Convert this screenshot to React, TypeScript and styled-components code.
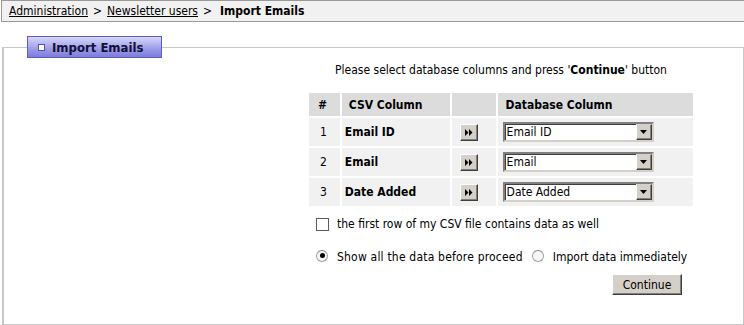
import React from "react";
import styled, { createGlobalStyle } from "styled-components";

const Global = createGlobalStyle`
  html, body { margin: 0; padding: 0; background: #fff; }
  body {
    font-family: "DejaVu Sans Condensed", "DejaVu Sans", "Liberation Sans", sans-serif;
    font-size: 12px;
    color: #000;
    overflow: hidden;
  }
`;

const Page = styled.div`
  width: 744px;
  height: 325px;
  position: relative;
`;

const Breadcrumb = styled.div`
  margin-left: 1px;
  height: 22px;
  box-sizing: border-box;
  border: 1px solid #999;
  border-right: none;
  background: #f1f1f1;
  display: flex;
  align-items: center;
  padding-left: 7px;
  gap: 5px;
  white-space: nowrap;
`;

const Crumb = styled.a`
  color: #000;
  text-decoration: underline;
`;

const Current = styled.span`
  font-weight: bold;
  margin-left: 3px;
`;

const Panel = styled.fieldset`
  margin: 14px 0 0 2px;
  padding: 0;
  width: 742px;
  height: 289px;
  box-sizing: border-box;
  border: 1px solid #c8c8c8;
  border-left-width: 2px;
  min-width: 0;
`;

const Legend = styled.legend`
  margin-left: 23px;
  padding: 0 0 0 10px;
  width: 135px;
  height: 22px;
  box-sizing: border-box;
  border: 1px solid #5c5cc4;
  background: linear-gradient(#d7d7fa 0%, #b4b4f0 35%, #9696e6 65%, #7d7ddc 100%);
  display: flex;
  align-items: center;
  gap: 7px;
  font-weight: bold;
  font-size: 13px;
  color: #10103a;
`;

const LegendIcon = styled.span`
  width: 5px;
  height: 5px;
  border: 1px solid #5050b8;
  background: #fff;
  display: inline-block;
`;

const Content = styled.div`
  margin-left: 303px;
  width: 388px;
  padding-top: 5px;
`;

const Intro = styled.p`
  margin: 0 0 13px 0;
  text-align: center;
  line-height: 15px;
`;

const Grid = styled.table`
  border-collapse: separate;
  border-spacing: 2px;
  margin: 0;
`;

const HeadCell = styled.th<{ $w: number; $pl: number }>`
  width: ${(p) => p.$w}px;
  height: 23px;
  padding: 0 0 0 ${(p) => p.$pl}px;
  box-sizing: border-box;
  background: #dcdcdc;
  text-align: left;
  font-weight: bold;
`;

const Cell = styled.td<{ $pl: number; $bold?: boolean }>`
  height: 28px;
  padding: 0 0 0 ${(p) => p.$pl}px;
  box-sizing: border-box;
  background: #f1f1f1;
  font-weight: ${(p) => (p.$bold ? "bold" : "normal")};
`;

const ArrowButton = styled.span`
  width: 18px;
  height: 17px;
  box-sizing: border-box;
  display: inline-flex;
  align-items: center;
  justify-content: center;
  background: #d4d0c8;
  border: 1px solid;
  border-color: #fff #404040 #404040 #fff;
  box-shadow: inset -1px -1px 0 #808080;
  vertical-align: middle;
`;

const SelectBox = styled.div`
  width: 151px;
  height: 20px;
  box-sizing: border-box;
  border: 2px solid;
  border-color: #808080 #d4d0c8 #d4d0c8 #808080;
  box-shadow: inset 1px 1px 0 #404040;
  background: #fff;
  display: flex;
  align-items: stretch;
`;

const SelectText = styled.span`
  flex: 1;
  padding-left: 2px;
  padding-top: 1px;
  line-height: 15px;
`;

const SelectArrow = styled.span`
  width: 16px;
  box-sizing: border-box;
  background: #d4d0c8;
  border: 1px solid;
  border-color: #d4d0c8 #404040 #404040 #fff;
  box-shadow: inset -1px -1px 0 #808080;
  display: flex;
  align-items: center;
  justify-content: center;
`;

const Options = styled.div`
  padding-left: 9px;
  margin-top: 7px;
`;

const OptionRow = styled.label<{ $mb: number }>`
  display: flex;
  align-items: center;
  height: 18px;
  margin-bottom: ${(p) => p.$mb}px;
  white-space: nowrap;
`;

const Check = styled.span`
  width: 13px;
  height: 13px;
  box-sizing: border-box;
  border: 1px solid #5b5b5b;
  background: #fff;
  margin-right: 8px;
`;

const Radio = styled.span<{ $on?: boolean }>`
  width: 12px;
  height: 12px;
  box-sizing: border-box;
  border-radius: 50%;
  border: 1px solid #a0a0a0;
  border-top-color: #808080;
  background: #f6f6f6;
  display: inline-flex;
  align-items: center;
  justify-content: center;
  margin-right: 9px;
  margin-top: -3px;
  &::after {
    content: "";
    width: 5px;
    height: 5px;
    border-radius: 50%;
    background: ${(p) => (p.$on ? "#000" : "transparent")};
  }
`;

const RadioText = styled.span<{ $gap?: number; $ls?: number }>`
  margin-right: ${(p) => p.$gap ?? 0}px;
  letter-spacing: ${(p) => p.$ls ?? 0}px;
`;

const Actions = styled.div`
  display: flex;
  justify-content: flex-end;
  margin-top: -6px;
  padding-right: 13px;
`;

const Button = styled.button`
  width: 70px;
  height: 21px;
  box-sizing: border-box;
  font-family: inherit;
  font-size: 12px;
  color: #000;
  background: #d4d0c8;
  border: 1px solid;
  border-color: #fff #404040 #404040 #fff;
  box-shadow: inset -1px -1px 0 #808080;
  padding: 0;
`;

const rows = [
  { n: 1, csv: "Email ID", db: "Email ID" },
  { n: 2, csv: "Email", db: "Email" },
  { n: 3, csv: "Date Added", db: "Date Added" },
];

const DoubleArrow = () => (
  <svg width="8" height="7" viewBox="0 0 8 7">
    <path d="M0 0 L3.5 3.5 L0 7 Z M4 0 L7.5 3.5 L4 7 Z" fill="#000" />
  </svg>
);

const DownArrow = () => (
  <svg width="7" height="4" viewBox="0 0 7 4">
    <path d="M0 0 H7 L3.5 4 Z" fill="#000" />
  </svg>
);

export default function App() {
  return (
    <Page>
      <Global />
      <Breadcrumb>
        <Crumb>Administration</Crumb>
        <span>&gt;</span>
        <Crumb>Newsletter users</Crumb>
        <span>&gt;</span>
        <Current>Import Emails</Current>
      </Breadcrumb>
      <Panel>
        <Legend>
          <LegendIcon />
          Import Emails
        </Legend>
        <Content>
          <Intro>
            Please select database columns and press '<b>Continue</b>' button
          </Intro>
          <Grid>
            <thead>
              <tr>
                <HeadCell $w={31} $pl={9}>#</HeadCell>
                <HeadCell $w={109} $pl={7}>CSV Column</HeadCell>
                <HeadCell $w={44} $pl={0}></HeadCell>
                <HeadCell $w={196} $pl={8}>Database Column</HeadCell>
              </tr>
            </thead>
            <tbody>
              {rows.map((r) => (
                <tr key={r.n}>
                  <Cell $pl={11}>{r.n}</Cell>
                  <Cell $pl={3} $bold>{r.csv}</Cell>
                  <Cell $pl={8}>
                    <ArrowButton>
                      <DoubleArrow />
                    </ArrowButton>
                  </Cell>
                  <Cell $pl={5}>
                    <SelectBox>
                      <SelectText>{r.db}</SelectText>
                      <SelectArrow>
                        <DownArrow />
                      </SelectArrow>
                    </SelectBox>
                  </Cell>
                </tr>
              ))}
            </tbody>
          </Grid>
          <Options>
            <OptionRow $mb={15}>
              <Check />
              the first row of my CSV file contains data as well
            </OptionRow>
            <OptionRow $mb={14}>
              <Radio $on />
              <RadioText $gap={9} $ls={0.2}>Show all the data before proceed</RadioText>
              <Radio />
              <RadioText>Import data immediately</RadioText>
            </OptionRow>
          </Options>
          <Actions>
            <Button>Continue</Button>
          </Actions>
        </Content>
      </Panel>
    </Page>
  );
}
